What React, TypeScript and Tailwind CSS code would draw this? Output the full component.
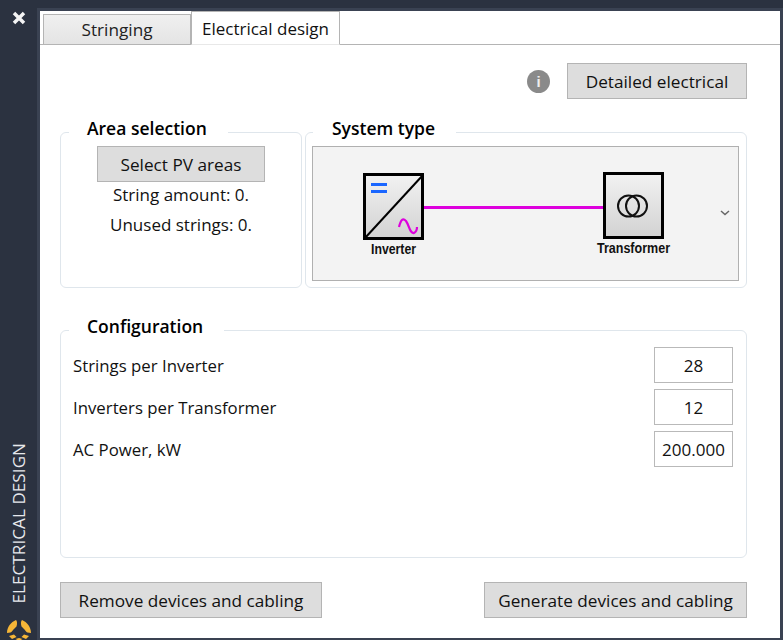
const btn =
  'flex items-center justify-center h-[36px] pt-[2px] bg-[#dddddd] border border-[#b4b4b4] text-[17.200px] text-[#111] leading-none whitespace-nowrap';
const field =
  'flex items-center justify-center w-[79px] h-[36px] bg-white border border-[#b9b9b9] text-[17px] text-[#111] leading-none';
const legend = 'h-[20px] text-[17.500px] font-semibold text-black leading-[12px] whitespace-nowrap';
const box = 'p-0 border border-[#dfe6ec] rounded-[6px]';
const label = 'pt-[2px] text-[16.800px] text-[#111]';

function Logo() {
  return (
    <svg width="24" height="21" viewBox="0 0 24 21" className="block">
      <path d="M9 0 C4 2 0 7 0 13 L3.500 12.500 C5 12 6.500 9 9.500 6.500 C10.500 3 10 1 9 0 Z" fill="#f6b637" />
      <path d="M15 0 C20 2 24 7 24 13 L20.500 12.500 C19 12 17.500 9 14.500 6.500 C13.500 3 14 1 15 0 Z" fill="#f6b637" />
      <path d="M2 16 L7 14.500 L9.500 17 L5 19 Z" fill="#f6b637" />
      <path d="M22 16 L17 14.500 L14.500 17 L19 19 Z" fill="#f6b637" />
      <path d="M8.500 19 L12 18 L15.500 19 L12 21 Z" fill="#f6b637" />
    </svg>
  );
}

function Diagram() {
  return (
    <svg width="423" height="131" viewBox="0 0 423 131" className="block">
      <defs>
        <linearGradient id="box" x1="0" y1="0" x2="0" y2="1">
          <stop offset="0" stopColor="#f2f2f2" />
          <stop offset="1" stopColor="#d2d2d2" />
        </linearGradient>
      </defs>
      <rect x="51.500" y="27.500" width="58" height="64" fill="url(#box)" stroke="#000" strokeWidth="3" />
      <path d="M52 91 L110 28" stroke="#000" strokeWidth="2" />
      <rect x="58" y="36" width="16" height="3" fill="#1a66ff" />
      <rect x="58" y="43" width="16" height="3" fill="#1a66ff" />
      <path d="M86 80 C88 72 90 71 93 74 C96 78 97 87 101 86 C103 85 104 83 104 80" fill="none" stroke="#dd00dd" strokeWidth="2.200" />
      <rect x="111" y="59" width="179" height="3" fill="#dd00dd" />
      <rect x="291.500" y="26.500" width="58" height="64" fill="url(#box)" stroke="#000" strokeWidth="3" />
      <circle cx="315.500" cy="59" r="10.500" fill="none" stroke="#111" strokeWidth="2" />
      <circle cx="323.500" cy="59" r="10.500" fill="none" stroke="#111" strokeWidth="2" />
      <text x="80.500" y="107" textAnchor="middle" fontFamily="Liberation Sans, sans-serif" fontWeight="700" fontSize="14" textLength="45" lengthAdjust="spacingAndGlyphs" fill="#111">Inverter</text>
      <text x="320.500" y="106" textAnchor="middle" fontFamily="Liberation Sans, sans-serif" fontWeight="700" fontSize="14" textLength="73" lengthAdjust="spacingAndGlyphs" fill="#111">Transformer</text>
    </svg>
  );
}

export default function App() {
  return (
    <div className="flex w-[783px] h-[640px] bg-[#2b3240] overflow-hidden font-['Open_Sans','Noto_Sans',sans-serif]">
      <aside className="flex flex-col items-center w-[37px] h-full shrink-0 pt-[11px]">
        <svg width="14" height="14" viewBox="0 0 14 14">
          <path d="M2 2 L12 12 M12 2 L2 12" stroke="#f4f4f4" strokeWidth="3.500" />
        </svg>
        <div className="mt-auto text-[17px] leading-none text-[#e6e8ec] [writing-mode:vertical-rl] rotate-180 tracking-[0.1px]">
          ELECTRICAL DESIGN
        </div>
        <div className="mt-[16px] -mb-[1px]">
          <Logo />
        </div>
      </aside>

      <div className="flex-1 mt-[8px] pt-[3px] pl-[3px] pr-[3px] pb-[2px] bg-[#3a4252]">
        <main className="flex flex-col h-full bg-white">
          <div className="flex items-end h-[34px] pl-[3px] border-b border-[#b4b4b4] shrink-0">
            <div className="flex items-center justify-center w-[148px] h-[31px] -mb-[1px] border border-[#b4b4b4] bg-gradient-to-b from-[#f0f0f0] to-[#e4e4e4] text-[17.200px] text-[#222] leading-none">
              Stringing
            </div>
            <div className="flex items-center justify-center w-[149px] h-[34px] -mb-[1px] border border-b-[#e8e8e8] border-[#b4b4b4] bg-white text-[17px] text-[#111] leading-none">
              Electrical design
            </div>
          </div>

          <div className="flex flex-col flex-1 pl-[20px] pr-[33px] pt-[18px]">
            <div className="flex items-center justify-end">
              <span className="flex items-center justify-center w-[23px] h-[23px] rounded-full bg-[#8a8a8a] mr-[17px] text-[15px] font-bold text-[#eeeeee] leading-none font-['Liberation_Sans',sans-serif]">
                i
              </span>
              <button className={`${btn} w-[180px]`}>Detailed electrical</button>
            </div>

            <div className="flex gap-[3px] mt-[23px]">
              <fieldset className={`${box} w-[242px] h-[166px]`}>
                <legend className={`${legend} ml-[8px] pl-[18px] pr-[21px]`}>Area selection</legend>
                <div className="flex flex-col items-center pt-[4px]">
                  <button className={`${btn} w-[168px]`}>Select PV areas</button>
                  <div className="-mt-[2px] text-[17px] leading-[30px] text-[#111] whitespace-nowrap text-center">
                    <div>String amount: 0.</div>
                    <div>Unused strings: 0.</div>
                  </div>
                </div>
              </fieldset>
              <fieldset className={`${box} w-[442px] h-[166px]`}>
                <legend className={`${legend} ml-[7px] pl-[19px] pr-[21px]`}>System type</legend>
                <div className="pt-[4px] pl-[6px]">
                  <div className="relative w-[427px] h-[135px] bg-[#f3f3f3] border border-[#b0b0b0]">
                    <Diagram />
                    <svg width="10" height="6" viewBox="0 0 10 6" className="absolute left-[407px] top-[63px]">
                      <path d="M1 1 L5 4.500 L9 1" fill="none" stroke="#666" strokeWidth="1.500" />
                    </svg>
                  </div>
                </div>
              </fieldset>
            </div>

            <fieldset className={`${box} w-[687px] h-[238px] mt-[32px]`}>
              <legend className={`${legend} ml-[8px] pl-[18px] pr-[21px]`}>Configuration</legend>
              <div className="flex flex-col gap-[6px] pt-[7px] pl-[12px] pr-[13px]">
                <div className="flex items-center justify-between">
                  <span className={label}>Strings per Inverter</span>
                  <div className={field}>28</div>
                </div>
                <div className="flex items-center justify-between">
                  <span className={label}>Inverters per Transformer</span>
                  <div className={field}>12</div>
                </div>
                <div className="flex items-center justify-between">
                  <span className={label}>AC Power, kW</span>
                  <div className={field}>200.000</div>
                </div>
              </div>
            </fieldset>

            <div className="flex justify-between mt-[24px]">
              <button className={`${btn} w-[262px]`}>Remove devices and cabling</button>
              <button className={`${btn} w-[263px]`}>Generate devices and cabling</button>
            </div>
          </div>
        </main>
      </div>
    </div>
  );
}
